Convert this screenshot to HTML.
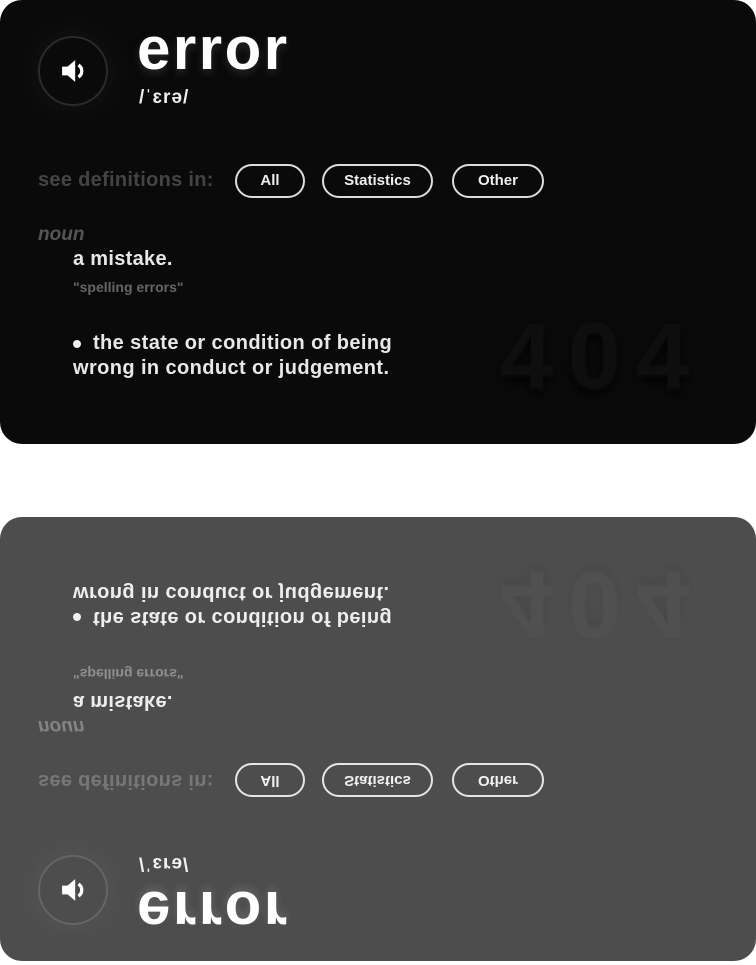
<!DOCTYPE html>
<html><head><meta charset="utf-8"><style>
html,body{margin:0;padding:0;background:#fff;width:756px;height:965px;overflow:hidden;font-family:"Liberation Sans",sans-serif}
.card{position:absolute;left:0;width:756px;height:444px;background:#0a0a0a;border-radius:22px;overflow:hidden}
.top{top:0}
.bot{top:517px;transform:scaleY(-1);opacity:.72}
.circ{position:absolute;left:38px;top:36px;width:66px;height:66px;border:2px solid #2a2a2a;border-radius:50%;box-shadow:0 0 30px rgba(30,30,30,.6)}
.circ svg{position:absolute;left:21px;top:21px}
h1{position:absolute;left:137px;top:19px;margin:0;color:#fff;font-size:60px;font-weight:bold;letter-spacing:2.5px;line-height:60px;text-shadow:0 4px 8px rgba(60,60,60,.6)}
.ph{position:absolute;left:139px;top:87px;color:#eee;font-size:19px;font-weight:bold;letter-spacing:1px}
.see{position:absolute;left:38px;top:169px;color:#444;font-size:20px;font-weight:bold;letter-spacing:.3px}
.btn{position:absolute;top:164px;height:30px;border:2px solid #ddd;border-radius:17px;color:#eee;font-size:15px;font-weight:bold;text-align:center;line-height:30px}
.noun{position:absolute;left:38px;top:224px;color:#555;font-size:19px;font-style:italic;font-weight:bold}
.m{position:absolute;left:73px;top:248px;color:#e8e8e8;font-size:20px;font-weight:bold;letter-spacing:.3px}
.ex{position:absolute;left:73px;top:279px;color:#666;font-size:14px;font-weight:bold}
.d{position:absolute;left:73px;top:331px;color:#e8e8e8;font-size:20px;font-weight:bold;line-height:25px;letter-spacing:.4px}
.dot{display:inline-block;width:8px;height:8px;background:#eee;border-radius:50%;margin-right:12px;vertical-align:middle}
.f{position:absolute;left:500px;top:302px;color:#0e0e0e;font-size:94px;font-weight:bold;letter-spacing:16px;text-shadow:0 6px 10px rgba(0,0,0,.9),0 2px 3px #1a1a1a}
</style></head><body>
<div class="card top">
<div class="circ"><svg width="24" height="24" viewBox="0 0 22 22"><path d="M1 7h5l7-6v20l-7-6H1z" fill="#fff"/><path d="M16 5.5a6.5 6.5 0 0 1 0 11" stroke="#fff" stroke-width="3" fill="none"/></svg></div>
<h1>error</h1><div class="ph">/ˈɛrə/</div>
<div class="see">see definitions in:</div>
<div class="btn" style="left:235px;width:66px">All</div>
<div class="btn" style="left:322px;width:107px">Statistics</div>
<div class="btn" style="left:452px;width:88px">Other</div>
<div class="noun">noun</div><div class="m">a mistake.</div><div class="ex">"spelling errors"</div>
<div class="d"><span class="dot"></span>the state or condition of being<br>wrong in conduct or judgement.</div>
<div class="f">404</div>
</div>
<div class="card bot">
<div class="circ"><svg width="24" height="24" viewBox="0 0 22 22"><path d="M1 7h5l7-6v20l-7-6H1z" fill="#fff"/><path d="M16 5.5a6.5 6.5 0 0 1 0 11" stroke="#fff" stroke-width="3" fill="none"/></svg></div>
<h1>error</h1><div class="ph">/ˈɛrə/</div>
<div class="see">see definitions in:</div>
<div class="btn" style="left:235px;width:66px">All</div>
<div class="btn" style="left:322px;width:107px">Statistics</div>
<div class="btn" style="left:452px;width:88px">Other</div>
<div class="noun">noun</div><div class="m">a mistake.</div><div class="ex">"spelling errors"</div>
<div class="d"><span class="dot"></span>the state or condition of being<br>wrong in conduct or judgement.</div>
<div class="f">404</div>
</div>
</body></html>
